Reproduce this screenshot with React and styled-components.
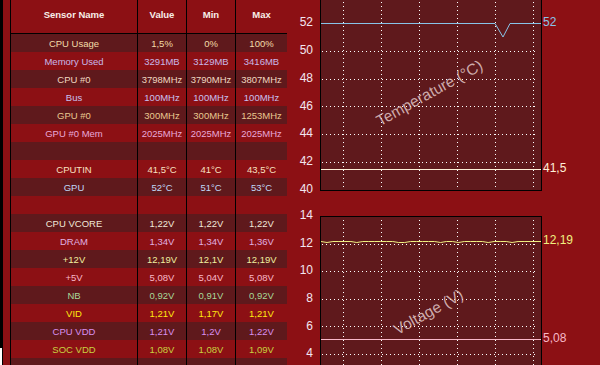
import React from 'react';
import styled, { createGlobalStyle } from 'styled-components';

const GlobalStyle = createGlobalStyle`
  html, body { margin: 0; padding: 0; background: #8c1014; }
  body { font-family: "Liberation Sans", Arial, sans-serif; overflow: hidden; }
`;

const RED = '#8c1014';
const DARK = '#5f191c';

const Page = styled.div`
  display: flex;
  width: 600px;
  height: 365px;
  overflow: hidden;
  background: ${RED};
`;

const EdgeStrip = styled.div`
  width: 3px;
  background: #000;
  display: flex;
  flex-direction: column;
  justify-content: flex-end;
`;

const EdgeNotch = styled.div`
  width: 2px;
  height: 17px;
  background: #fff;
`;

const Gutter = styled.div`
  width: 8px;
  border-right: 1px solid #000;
`;

const Table = styled.div`
  width: 276px;
  display: flex;
  flex-direction: column;
  flex-shrink: 0;
`;

const HeaderRow = styled.div`
  display: flex;
  height: 33px;
  flex-shrink: 0;
  border-bottom: 1px solid #000;
  background: ${RED};
`;

const Row = styled.div`
  display: flex;
  height: 18px;
  flex-shrink: 0;
  background: ${p => (p.$dark ? DARK : RED)};
  color: ${p => p.$color || '#f0e0d0'};
`;

const Cell = styled.div`
  width: ${p => p.$w}px;
  box-sizing: border-box;
  border-right: ${p => (p.$last ? 'none' : '1px solid #000')};
  display: flex;
  align-items: center;
  justify-content: center;
  font-size: 9.5px;
  white-space: nowrap;
`;

const HeadCell = styled(Cell)`
  font-weight: bold;
  color: #f8eee8;
  padding-bottom: 5px;
`;

const ChartColumn = styled.div`
  width: 313px;
  display: flex;
  flex-direction: column;
`;

const COLS = [127, 49, 49, 51];

const rows = [
  ['CPU Usage', '1,5%', '0%', '100%', '#f2dca8'],
  ['Memory Used', '3291MB', '3129MB', '3416MB', '#c8b8e8'],
  ['CPU #0', '3798MHz', '3790MHz', '3807MHz', '#f0d8c0'],
  ['Bus', '100MHz', '100MHz', '100MHz', '#c8c0f0'],
  ['GPU #0', '300MHz', '300MHz', '1253MHz', '#e8c890'],
  ['GPU #0 Mem', '2025MHz', '2025MHz', '2025MHz', '#e8a8d8'],
  ['', '', '', ''],
  ['CPUTIN', '41,5°C', '41°C', '43,5°C', '#f8e0c0'],
  ['GPU', '52°C', '51°C', '53°C', '#c0d8f8'],
  ['', '', '', ''],
  ['CPU VCORE', '1,22V', '1,22V', '1,22V', '#f0e8d8'],
  ['DRAM', '1,34V', '1,34V', '1,36V', '#e0b0e0'],
  ['+12V', '12,19V', '12,1V', '12,19V', '#f0f0a0'],
  ['+5V', '5,08V', '5,04V', '5,08V', '#f8b8c8'],
  ['NB', '0,92V', '0,91V', '0,92V', '#a8d898'],
  ['VID', '1,21V', '1,17V', '1,21V', '#ffe810'],
  ['CPU VDD', '1,21V', '1,2V', '1,22V', '#d890f0'],
  ['SOC VDD', '1,08V', '1,08V', '1,09V', '#c8d040'],
  ['CPU 1,8V', '1,83V', '1,82V', '1,84V', '#e8d8e8'],
];

const GRID_X = [56, 94, 132, 170, 208, 246];
const PLOT_L = 33;
const PLOT_R = 254;

function Chart({ height, plotTop, plotBottom, toY, ticks, gridVals, series, title, titleX, titleY }) {
  return (
    <svg width="313" height={height} style={{ display: 'block', flexShrink: 0 }}>
      <rect x={PLOT_L} y={plotTop} width={PLOT_R - PLOT_L} height={plotBottom - plotTop} fill={DARK} />
      {gridVals.map(v => (
        <line key={v} x1={PLOT_L + 2} x2={PLOT_R - 3} y1={Math.round(toY(v)) + 0.5} y2={Math.round(toY(v)) + 0.5}
          stroke="#fff" strokeDasharray="1 3" shapeRendering="crispEdges" />
      ))}
      {GRID_X.map(x => (
        <line key={x} x1={x + 0.5} x2={x + 0.5} y1={plotTop} y2={Math.min(plotBottom + 3, height)}
          stroke="#fff" strokeDasharray="1 3" shapeRendering="crispEdges" />
      ))}
      <text x={titleX} y={titleY} transform={`rotate(-29 ${titleX} ${titleY})`} textAnchor="middle"
        dominantBaseline="middle" fontFamily="Liberation Sans, Arial, sans-serif" fontSize="15.5"
        fill="#e2c8c8" fillOpacity="0.85">{title}</text>
      {series.map(s => (
        <g key={s.label}>
          <polyline points={s.points} fill="none" stroke={s.color} strokeWidth="1" />
          <text x={PLOT_R + 2} y={toY(s.value)} dominantBaseline="middle" fontSize="12"
            fontFamily="Liberation Sans, Arial, sans-serif" fill={s.color}>{s.label}</text>
        </g>
      ))}
      <path d={`M${PLOT_L + 0.5} ${plotTop} V${plotBottom + 0.5} H${PLOT_R + 0.5} V${plotTop}`}
        fill="none" stroke="#000" strokeWidth="1" shapeRendering="crispEdges" />
      {plotTop >= 0 && (
        <line x1={PLOT_L} x2={PLOT_R + 1} y1={plotTop + 0.5} y2={plotTop + 0.5} stroke="#000" shapeRendering="crispEdges" />
      )}
      {ticks.map(v => (
        <text key={v} x="26" y={toY(v)} textAnchor="end" dominantBaseline="middle" fontSize="12"
          fontFamily="Liberation Sans, Arial, sans-serif" fill="#f2e6f0">{v}</text>
      ))}
    </svg>
  );
}

const tempY = v => 190 - (v - 40) * 13.93;
const voltY = v => 13 + (14 - v) * 13.8;

const flat = (y, from = PLOT_L + 1, to = PLOT_R) => `${from},${y} ${to},${y}`;

const gpuLine = (() => {
  const y = Math.round(tempY(52)) + 0.5;
  return `${PLOT_L + 1},${y} 208,${y} 216,37 223,${y} ${PLOT_R},${y}`;
})();

const noise = [0, 1, 0, 0, 0, 0, 1, 0, 0, 0, 0, 0, 0, 1, 1, 0, 0, 0, 0, 0, 1, 0, 0, 1, 0, 0, 0, 0, 1, 0, 0, 0, 1, 0, 0, 0, 0, 0];
const twelveLine = (() => {
  const base = Math.round(voltY(12.19)) + 0.5;
  const step = (PLOT_R - PLOT_L) / (noise.length - 1);
  return noise.map((n, i) => `${(PLOT_L + 1 + i * step).toFixed(1)},${base + n}`).join(' ');
})();

export default function App() {
  return (
    <>
      <GlobalStyle />
      <Page>
        <EdgeStrip><EdgeNotch /></EdgeStrip>
        <Gutter />
        <Table>
          <HeaderRow>
            {['Sensor Name', 'Value', 'Min', 'Max'].map((h, i) => (
              <HeadCell key={h} $w={COLS[i]} $last={i === 3}>{h}</HeadCell>
            ))}
          </HeaderRow>
          {rows.map((r, idx) => (
            <Row key={idx} $dark={idx % 2 === 0} $color={r[4]}>
              {r.slice(0, 4).map((c, i) => (
                <Cell key={i} $w={COLS[i]} $last={i === 3}>{c}</Cell>
              ))}
            </Row>
          ))}
        </Table>
        <ChartColumn>
          <Chart
            height={203}
            plotTop={-10}
            plotBottom={190}
            toY={tempY}
            ticks={[52, 50, 48, 46, 44, 42, 40]}
            gridVals={[50, 48, 46, 44, 42]}
            title="Temperature (°C)"
            titleX={143}
            titleY={94}
            series={[
              { label: '52', value: 52, color: '#88c4e8', points: gpuLine },
              { label: '41,5', value: 41.5, color: '#fff0d8', points: flat(Math.round(tempY(41.5)) + 0.5) },
            ]}
          />
          <Chart
            height={162}
            plotTop={13}
            plotBottom={200}
            toY={voltY}
            ticks={[14, 12, 10, 8, 6, 4]}
            gridVals={[12, 10, 8, 6, 4]}
            title="Voltage (V)"
            titleX={142}
            titleY={110}
            series={[
              { label: '12,19', value: 12.19, color: '#f0f080', points: twelveLine },
              { label: '5,08', value: 5.08, color: '#f8b8c8', points: flat(Math.round(voltY(5.08)) + 0.5) },
            ]}
          />
        </ChartColumn>
      </Page>
    </>
  );
}
